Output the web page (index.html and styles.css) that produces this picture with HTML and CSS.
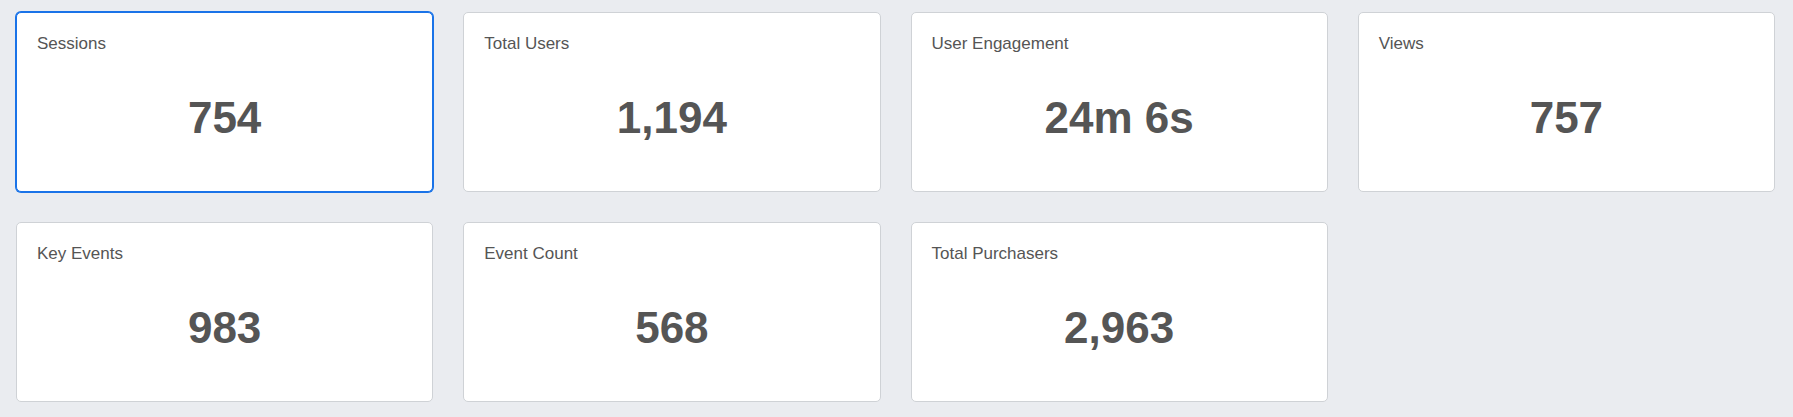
FILE: index.html
```html
<!DOCTYPE html>
<html lang="en">
<head>
<meta charset="utf-8">
<title>Metrics</title>
<link rel="stylesheet" href="styles.css">
</head>
<body>
<main class="grid">
  <section class="card card--active">
    <div class="card__label">Sessions</div>
    <div class="card__value">754</div>
  </section>
  <section class="card">
    <div class="card__label">Total Users</div>
    <div class="card__value">1,194</div>
  </section>
  <section class="card">
    <div class="card__label">User Engagement</div>
    <div class="card__value">24m 6s</div>
  </section>
  <section class="card">
    <div class="card__label">Views</div>
    <div class="card__value">757</div>
  </section>
  <section class="card">
    <div class="card__label">Key Events</div>
    <div class="card__value">983</div>
  </section>
  <section class="card">
    <div class="card__label">Event Count</div>
    <div class="card__value">568</div>
  </section>
  <section class="card">
    <div class="card__label">Total Purchasers</div>
    <div class="card__value">2,963</div>
  </section>
</main>
</body>
</html>
```
FILE: styles.css
```css
* { box-sizing: border-box; }

html, body {
  margin: 0;
  background: #eaecf0;
}

body {
  font-family: "Liberation Sans", Arial, sans-serif;
  color: #555;
}

.grid {
  display: grid;
  grid-template-columns: repeat(4, 1fr);
  gap: 30px;
  padding: 12px 18px 16px 16px;
}

.card {
  display: flex;
  flex-direction: column;
  height: 180px;
  padding: 21px 20px 10px;
  background: #fff;
  border: 1px solid #cfd2d6;
  border-radius: 5px;
}

.card--active {
  border-color: #1a73e8;
  box-shadow: 0 0 0 1px #1a73e8;
}

.card__label {
  font-size: 17px;
  line-height: 20px;
  color: #555;
}

.card__value {
  flex: 1;
  display: flex;
  align-items: center;
  justify-content: center;
  font-size: 44px;
  line-height: 50px;
  font-weight: 700;
  color: #555;
}
```
